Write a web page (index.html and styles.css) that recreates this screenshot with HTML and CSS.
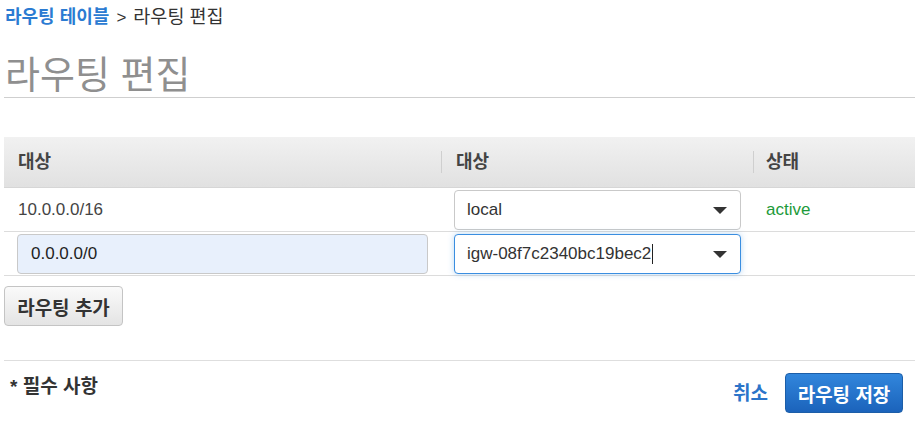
FILE: index.html
```html
<!DOCTYPE html>
<html lang="ko">
<head>
<meta charset="utf-8">
<title>라우팅 편집</title>
<link rel="stylesheet" href="styles.css">
</head>
<body>
<div class="page">
  <nav class="crumbs"><a class="crumb-link" href="#">라우팅 테이블</a> <span class="crumb-sep">&gt;</span> <span class="crumb-cur">라우팅 편집</span></nav>
  <h1 class="title">라우팅 편집</h1>

  <div class="routes">
    <div class="thead">
      <div class="th">대상</div>
      <div class="th sep">대상</div>
      <div class="th sep">상태</div>
    </div>
    <div class="tr">
      <div class="td plain">10.0.0.0/16</div>
      <div class="td sel-cell">
        <div class="select"><span class="sel-text">local</span><span class="caret"></span></div>
      </div>
      <div class="td status">active</div>
    </div>
    <div class="tr">
      <div class="td in-cell"><div class="input">0.0.0.0/0</div></div>
      <div class="td sel-cell">
        <div class="select focus"><span class="sel-text">igw-08f7c2340bc19bec2<span class="cursor"></span></span><span class="caret"></span></div>
      </div>
      <div class="td"></div>
    </div>
  </div>

  <button class="btn-add" type="button">라우팅 추가</button>

  <div class="footer">
    <div class="req">* 필수 사항</div>
    <div class="actions">
      <a class="cancel" href="#">취소</a>
      <button class="btn-save" type="button">라우팅 저장</button>
    </div>
  </div>
</div>
</body>
</html>
```
FILE: styles.css
```css
* { box-sizing: border-box; }
html, body { margin: 0; background: #fff; }
body {
  font-family: "Liberation Sans", "Noto Sans CJK KR", Arial, sans-serif;
  color: #333;
}
.page { padding: 6px 0 0 4px; width: 915px; }

.crumbs {
  font-size: 18px;
  line-height: 22px;
  height: 22px;
  padding-left: 1px;
  color: #333;
}
.crumb-sep { font-size: 17px; margin: 0 2px; }
.crumb-cur { font-size: 18.5px; }
.crumb-link { color: #2b7bd2; font-weight: bold; text-decoration: none; }

.title {
  margin: 25px 0 0;
  font-size: 38px;
  line-height: 44px;
  height: 45px;
  font-weight: normal;
  color: #8f8f8f;
  padding-left: 1px;
  border-bottom: 1px solid #cfcfcf;
}

.routes { margin-top: 39px; }
.thead, .tr {
  display: grid;
  grid-template-columns: 437px 312px 1fr;
}
.thead {
  height: 51px;
  background: linear-gradient(#f1f1f1, #e1e1e1);
  border-bottom: 1px solid #d6d6d6;
  align-items: center;
}
.th {
  font-size: 18px;
  font-weight: bold;
  color: #444;
  padding-left: 14px;
  position: relative;
  line-height: 22px;
}
.th.sep::before {
  content: "";
  position: absolute;
  left: 0;
  top: 0;
  bottom: 0;
  border-left: 1px solid #cfcfcf;
}
.th.sep { padding-left: 15px; }
.th.sep:last-child { padding-left: 13px; }

.tr {
  border-bottom: 1px solid #dcdcdc;
  padding: 2px 0 1px;
  align-items: center;
  height: 44px;
}
.td { font-size: 17px; }
.td.plain { padding-left: 14px; color: #444; }
.td.in-cell { padding-left: 13px; }
.td.sel-cell { padding-left: 13px; }
.td.status { color: #1d9a3a; padding-left: 13px; }

.input {
  width: 411px;
  height: 40px;
  line-height: 38px;
  padding-left: 13px;
  background: #e8f0fc;
  border: 1px solid #c9c9c9;
  border-radius: 4px;
  color: #222;
}
.select {
  width: 287px;
  height: 40px;
  border: 1px solid #c9c9c9;
  border-radius: 4px;
  display: flex;
  align-items: center;
  justify-content: space-between;
  padding: 0 13px 0 12px;
  color: #333;
  background: #fff;
}
.select.focus {
  border-color: #3a8ee0;
  box-shadow: 0 0 6px rgba(58, 142, 224, 0.35);
}
.sel-text { display: inline-flex; align-items: center; }
.cursor {
  display: inline-block;
  width: 1px;
  height: 20px;
  background: #222;
  margin-left: 1px;
}
.caret {
  width: 0;
  height: 0;
  border-left: 7px solid transparent;
  border-right: 7px solid transparent;
  border-top: 7px solid #333;
}

.btn-add {
  display: block;
  margin-top: 10px;
  width: 119px;
  height: 40px;
  font-family: inherit;
  font-size: 19px;
  font-weight: bold;
  color: #333;
  background: linear-gradient(#fafafa, #e4e4e4);
  border: 1px solid #c4c4c4;
  border-radius: 4px;
  padding: 0;
}

.footer {
  margin-top: 34px;
  border-top: 1px solid #dedede;
  padding: 12px 12px 0 6px;
  display: flex;
  justify-content: space-between;
  align-items: flex-start;
}
.req {
  font-size: 19px;
  font-weight: bold;
  line-height: 22px;
  padding-top: 3px;
  color: #333;
}
.actions { display: flex; align-items: center; gap: 17px; }
.cancel {
  color: #2b74c9;
  font-weight: bold;
  font-size: 19px;
  line-height: 22px;
  text-decoration: none;
  margin-top: 1px;
}
.btn-save {
  width: 118px;
  height: 40px;
  font-family: inherit;
  font-size: 19px;
  font-weight: bold;
  color: #fff;
  background: linear-gradient(#3186dc, #1b63bb);
  border: 1px solid #1c5ea8;
  border-radius: 4px;
  padding: 0;
}
```
